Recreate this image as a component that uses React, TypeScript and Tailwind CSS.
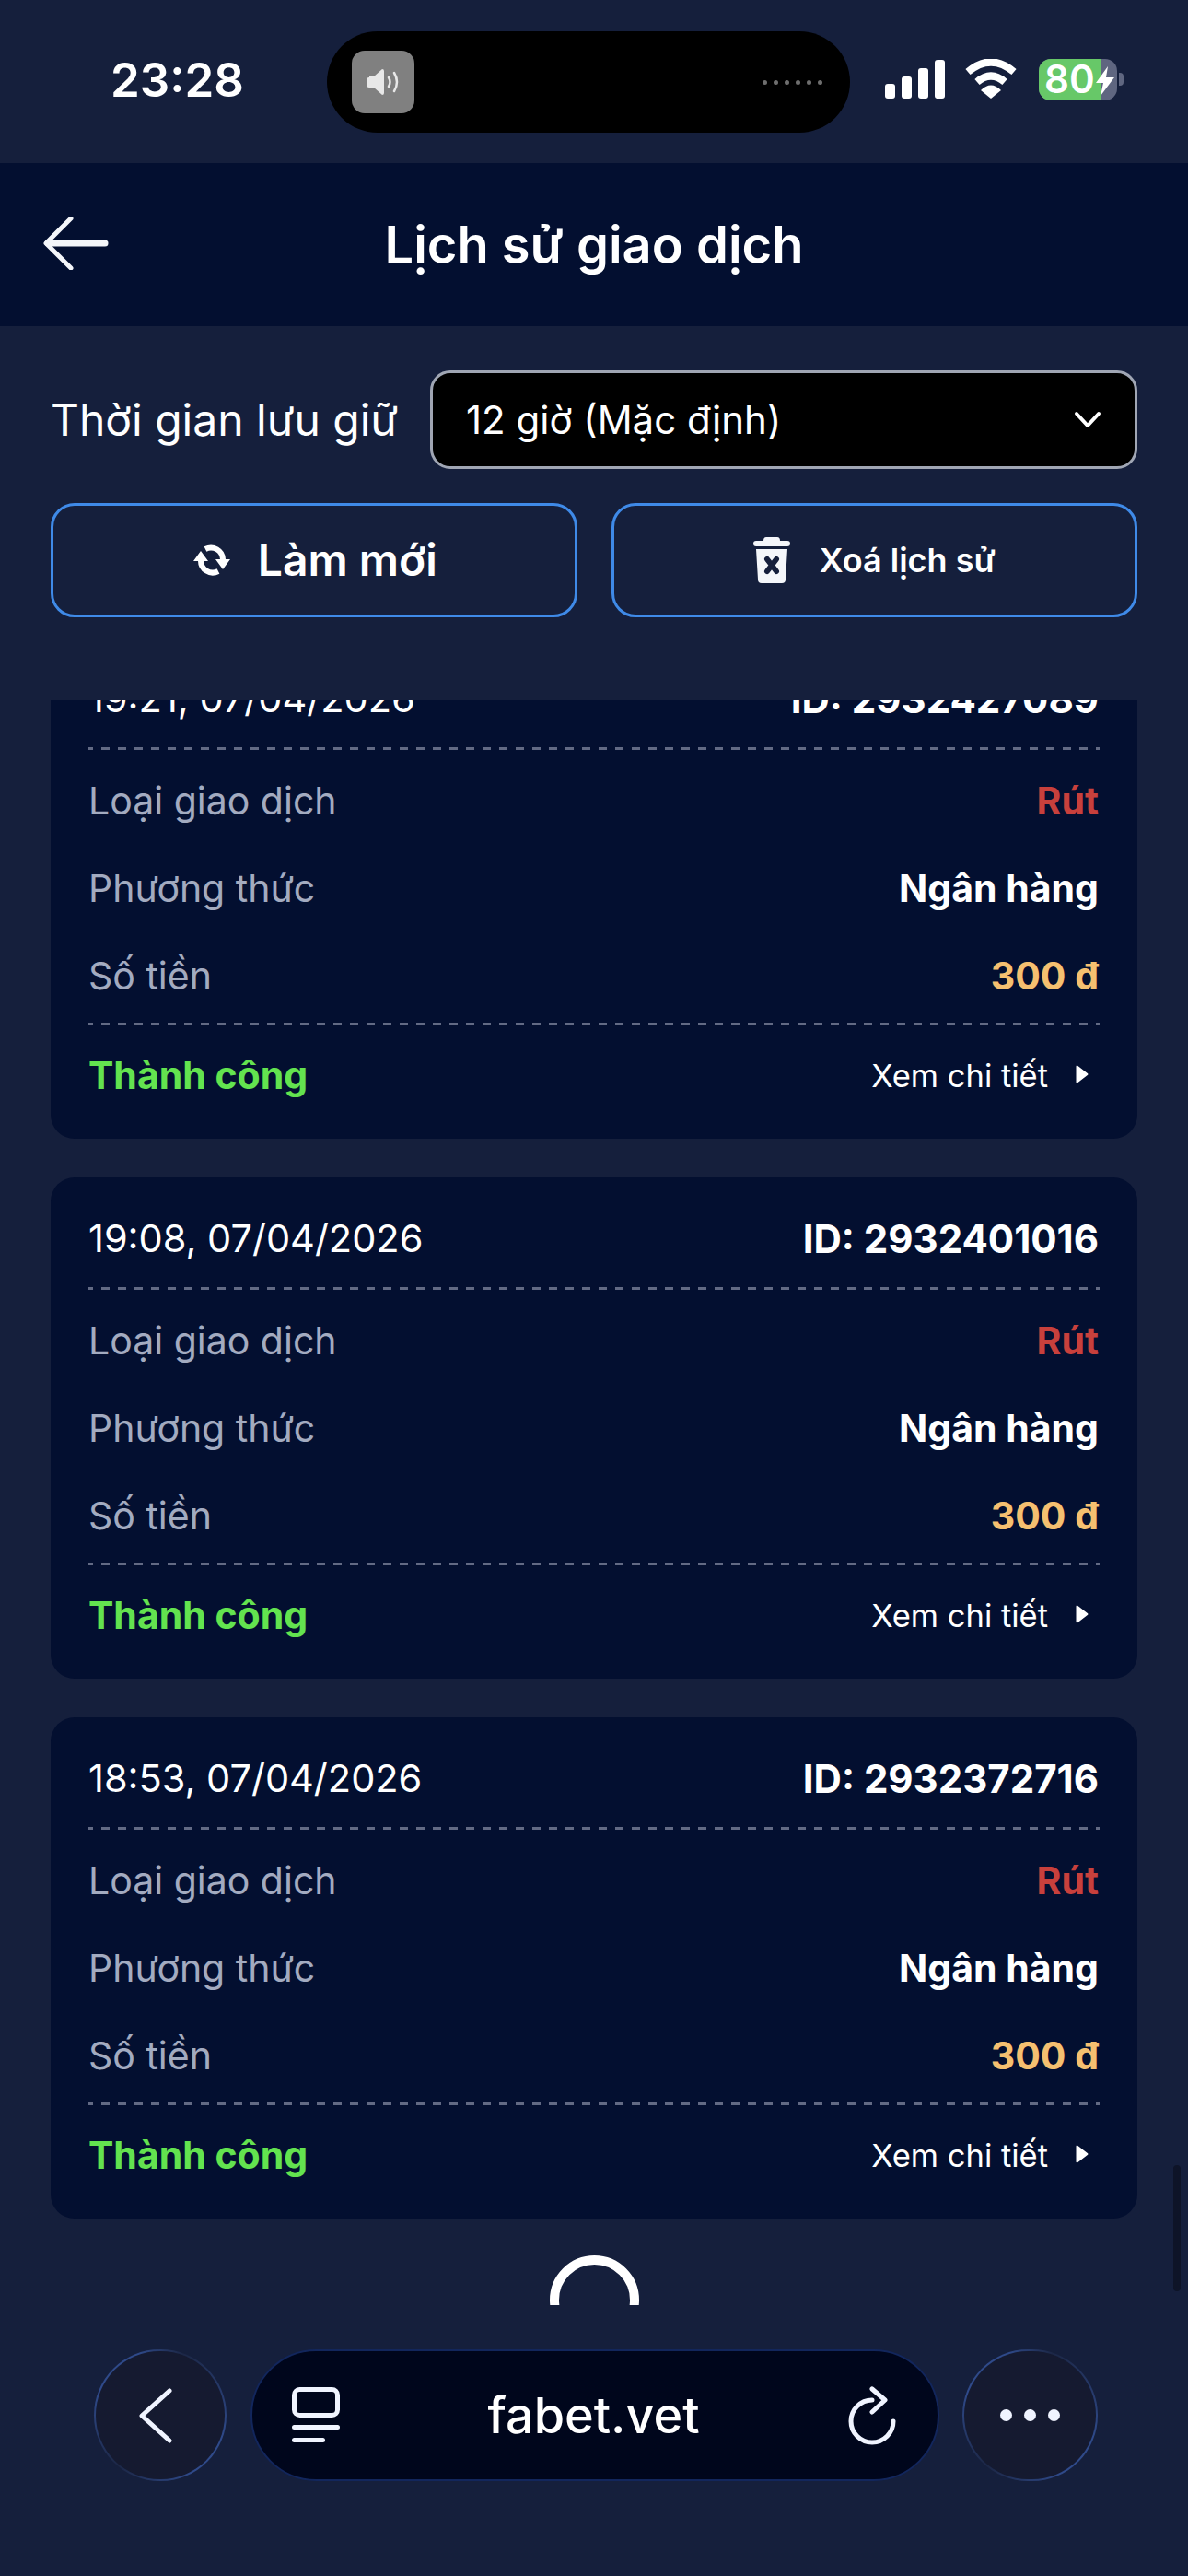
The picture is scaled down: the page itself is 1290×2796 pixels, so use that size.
import React from "react";

const font = { fontFamily: "Inter, 'Noto Sans', sans-serif" };

function Dash() {
  return <div className="h-[3px] w-full shrink-0 bg-[repeating-linear-gradient(90deg,#626a84_0_5px,transparent_5px_14px,#626a84_14px_18px)]" />;
}

function Row({ label, value, cls }: { label: string; value: string; cls: string }) {
  return (
    <div className="flex h-[95px] items-center justify-between">
      <span className="text-[41px] text-[#a3abc0]">{label}</span>
      <span className={`pr-[1px] text-[41px] font-bold ${cls}`}>{value}</span>
    </div>
  );
}

function Card({ date, id }: { date: string; id: string }) {
  return (
    <div className="flex h-[544px] flex-col rounded-[26px] bg-[#030f30] px-[41px]">
      <div className="flex h-[119px] items-center justify-between pt-[14px]">
        <span className="text-[41.5px] text-white">{date}</span>
        <span className="pr-[1px] text-[42px] font-bold text-white">ID: {id}</span>
      </div>
      <Dash />
      <div className="pt-[8px] pb-[3px]">
        <Row label="Loại giao dịch" value="Rút" cls="text-[#c8403c]" />
        <Row label="Phương thức" value="Ngân hàng" cls="text-white" />
        <Row label="Số tiền" value="300 đ" cls="text-[#f5c070]" />
      </div>
      <Dash />
      <div className="flex h-[110px] items-center justify-between">
        <span className="text-[41px] font-bold text-[#63e34f]">Thành công</span>
        <span className="flex items-center gap-[30px] pr-[12px] text-[34.5px] text-white">
          Xem chi tiết
          <svg className="mb-[4px]" width="14" height="20" viewBox="0 0 14 20">
            <path d="M1.5 1.5 L12.5 10 L1.5 18.5 Z" fill="#fff" stroke="#fff" strokeWidth="2" strokeLinejoin="round" />
          </svg>
        </span>
      </div>
    </div>
  );
}

function Round({ wide, children }: { wide: boolean; children: React.ReactNode }) {
  return (
    <div
      className={`h-[143px] rounded-full bg-[conic-gradient(from_20deg,#1c2746_0deg,#2f4a8a_90deg,#2f4a8a_130deg,#1c2746_200deg,#2f4a8a_270deg,#2f4a8a_320deg,#1c2746_360deg)] p-[2px] ${wide ? "w-[147px]" : "w-[144px]"}`}
    >
      <div className="flex h-full w-full items-center justify-center rounded-full bg-[#151a30]">{children}</div>
    </div>
  );
}

export default function App() {
  return (
    <div style={font} className="relative flex h-[2796px] w-[1290px] flex-col overflow-hidden bg-[#151f3c] text-white">
      {/* status bar */}
      <div className="relative flex h-[177px] items-center">
        <span className="absolute left-[120px] top-[56px] text-[51px] leading-[62px] font-semibold">23:28</span>
        <div className="absolute left-[355px] top-[34px] flex h-[110px] w-[568px] items-center justify-between rounded-[55px] bg-black pl-[27px] pr-[30px]">
          <div className="flex h-[68px] w-[68px] items-center justify-center rounded-[14px] bg-[#808080]">
            <svg width="36" height="28" viewBox="0 0 36 28" fill="none">
              <path d="M3 8 h5 l9 -8 q2 0 2 2 v24 q0 2 -2 2 l-9 -8 h-5 q-3 0 -3 -3 v-5 q0 -3 3 -3 z" fill="#e8e8e8" />
              <path d="M24 9 q3 5 0 10 M30 4 q6 10 0 20" stroke="#e8e8e8" strokeWidth="2.5" strokeLinecap="round" />
            </svg>
          </div>
          <div className="flex gap-[7px]">
            {[0, 1, 2, 3, 4, 5].map((i) => (
              <span key={i} className="h-[5px] w-[5px] rounded-full bg-[#6e6e6e]" />
            ))}
          </div>
        </div>
        <svg className="absolute left-[960px] top-[64px]" width="66" height="44" viewBox="0 0 66 44" fill="#fff">
          <rect x="1" y="27" width="11" height="16" rx="3" />
          <rect x="19" y="19" width="11" height="24" rx="3" />
          <rect x="37" y="10" width="11" height="33" rx="3" />
          <rect x="55" y="1" width="11" height="42" rx="3" />
        </svg>
        <svg className="absolute left-[1047px] top-[64px]" width="58" height="44" viewBox="0 0 58 44" fill="none">
          <path d="M4 14 Q29 -7 54 14" stroke="#fff" strokeWidth="8" strokeLinecap="butt" />
          <path d="M14 25 Q29 12 44 25" stroke="#fff" strokeWidth="8" />
          <path d="M18 35 Q29 24 40 35 L29 44 Z" fill="#fff" transform="translate(0,-1)" />
        </svg>
        <div className="absolute left-[1128px] top-[64px] h-[45px] w-[85px] overflow-hidden rounded-[13px] bg-[#5f6680]">
          <div className="h-full w-[68px] bg-[#67c868]" />
        </div>
        <div className="absolute left-[1215px] top-[79px] h-[14px] w-[5px] rounded-r-[4px] bg-[#5f6680]" />
        <span className="absolute left-[1134px] top-[62px] text-[42px] leading-[48px] font-semibold">80</span>
        <svg className="absolute left-[1189px] top-[72px]" width="22" height="32" viewBox="0 0 22 32">
          <path d="M14 0 L1 18 H9 L6 32 L21 12 H12 Z" fill="#fff" />
        </svg>
      </div>

      {/* header */}
      <div className="relative flex h-[177px] items-center justify-center bg-[#030f30]">
        <svg className="absolute left-[44px] top-[58px]" width="76" height="58" viewBox="0 0 76 58" fill="none">
          <path d="M33 2 L6 29 L33 56" stroke="#f4f6fa" strokeWidth="5" strokeLinecap="round" strokeLinejoin="round" />
          <path d="M8 29 H70" stroke="#f4f6fa" strokeWidth="7" strokeLinecap="round" />
        </svg>
        <h1 className="text-[56px] font-semibold">Lịch sử giao dịch</h1>
      </div>

      {/* controls */}
      <div className="flex flex-col gap-[37px] px-[55px] pt-[48px]">
        <div className="flex items-center justify-between">
          <span className="text-[48px]">Thời gian lưu giữ</span>
          <div className="flex h-[107px] w-[768px] items-center justify-between rounded-[22px] border-[3px] border-[#a0a6b4] bg-black pl-[36px] pr-[36px]">
            <span className="text-[42px]">12 giờ (Mặc định)</span>
            <svg width="30" height="20" viewBox="0 0 30 20" fill="none">
              <path d="M3 3 L15 16 L27 3" stroke="#fff" strokeWidth="4" strokeLinecap="round" strokeLinejoin="round" />
            </svg>
          </div>
        </div>
        <div className="grid grid-cols-2 gap-[37px]">
          <button className="flex h-[124px] items-center justify-center gap-[30px] rounded-[26px] border-[3px] border-[#3f8ae8] pl-[3px] text-[48px] font-semibold">
            <svg width="40" height="34" viewBox="0 0 40 34" fill="none">
              <path d="M32 16 A13 13 0 0 0 13 5" stroke="#fff" strokeWidth="6" />
              <path d="M8 17 A13 13 0 0 0 27 29" stroke="#fff" strokeWidth="6" />
              <path d="M8 7 L16 18 H0 Z M32 27 L24 16 H40 Z" fill="#fff" />
            </svg>
            Làm mới
          </button>
          <button className="flex h-[124px] items-center justify-center gap-[32px] rounded-[26px] border-[3px] border-[#3f8ae8] text-[36px] font-semibold">
            <svg width="40" height="50" viewBox="0 0 40 50">
              <path d="M14 0 h12 q3 0 3 4 h8 q3 0 3 3 t-3 3 H3 q-3 0 -3 -3 t3 -3 h8 q0 -4 3 -4 z" fill="#f4f6fa" />
              <path d="M3 13 H37 L35 46 q0 4 -4 4 H9 q-4 0 -4 -4 Z" fill="#f4f6fa" />
              <path d="M15 24 L25 37 M25 24 L15 37" stroke="#151f3c" strokeWidth="6" strokeLinecap="round" />
            </svg>
            Xoá lịch sử
          </button>
        </div>
      </div>

      {/* list */}
      <div className="relative mx-[55px] mt-[90px] h-[1742px] overflow-hidden">
        <div className="-mt-[68px] flex flex-col gap-[42px]">
          <Card date="19:21, 07/04/2026" id="2932427089" />
          <Card date="19:08, 07/04/2026" id="2932401016" />
          <Card date="18:53, 07/04/2026" id="2932372716" />
          <div className="-mt-[2px] flex justify-center">
            <div className="h-[97px] w-[97px] rounded-full border-[10px] border-white" />
          </div>
        </div>
      </div>

      {/* scrollbar */}
      <div className="absolute left-[1274px] top-[2350px] h-[137px] w-[8px] rounded-full bg-[#0e1428]" />

      {/* browser bar */}
      <div className="absolute left-[102px] top-[2550px] flex h-[143px] w-[1090px] items-center justify-between">
        <Round wide={false}>
          <svg className="mr-[10px]" width="36" height="60" viewBox="0 0 36 60" fill="none">
            <path d="M33 3 L3 30 L33 57" stroke="#f0f4ff" strokeWidth="5" strokeLinecap="round" strokeLinejoin="round" />
          </svg>
        </Round>
        <div className="flex h-[143px] w-[748px] items-center justify-between rounded-[72px] border-[2px] border-[#12265c] bg-[#00061c] pl-[43px] pr-[43px]">
          <svg width="52" height="62" viewBox="0 0 52 62" fill="none">
            <rect x="2.5" y="2.5" width="47" height="28" rx="6" stroke="#f0f4ff" strokeWidth="5" />
            <rect x="0" y="41" width="52" height="5" rx="2.5" fill="#f0f4ff" />
            <rect x="0" y="55" width="36" height="5" rx="2.5" fill="#f0f4ff" />
          </svg>
          <span className="text-[54px] font-medium text-white">fabet.vet</span>
          <svg width="54" height="64" viewBox="0 0 54 64" fill="none">
            <path d="M26 15 A23 23 0 1 0 49 38" stroke="#f0f4ff" strokeWidth="5" strokeLinecap="round" />
            <path d="M26 3 L40 15 L26 28" stroke="#f0f4ff" strokeWidth="5" strokeLinecap="round" strokeLinejoin="round" />
          </svg>
        </div>
        <Round wide={true}>
          <div className="flex gap-[13px]">
            <span className="h-[13px] w-[13px] rounded-full bg-[#f0f4ff]" />
            <span className="h-[13px] w-[13px] rounded-full bg-[#f0f4ff]" />
            <span className="h-[13px] w-[13px] rounded-full bg-[#f0f4ff]" />
          </div>
        </Round>
      </div>
    </div>
  );
}
